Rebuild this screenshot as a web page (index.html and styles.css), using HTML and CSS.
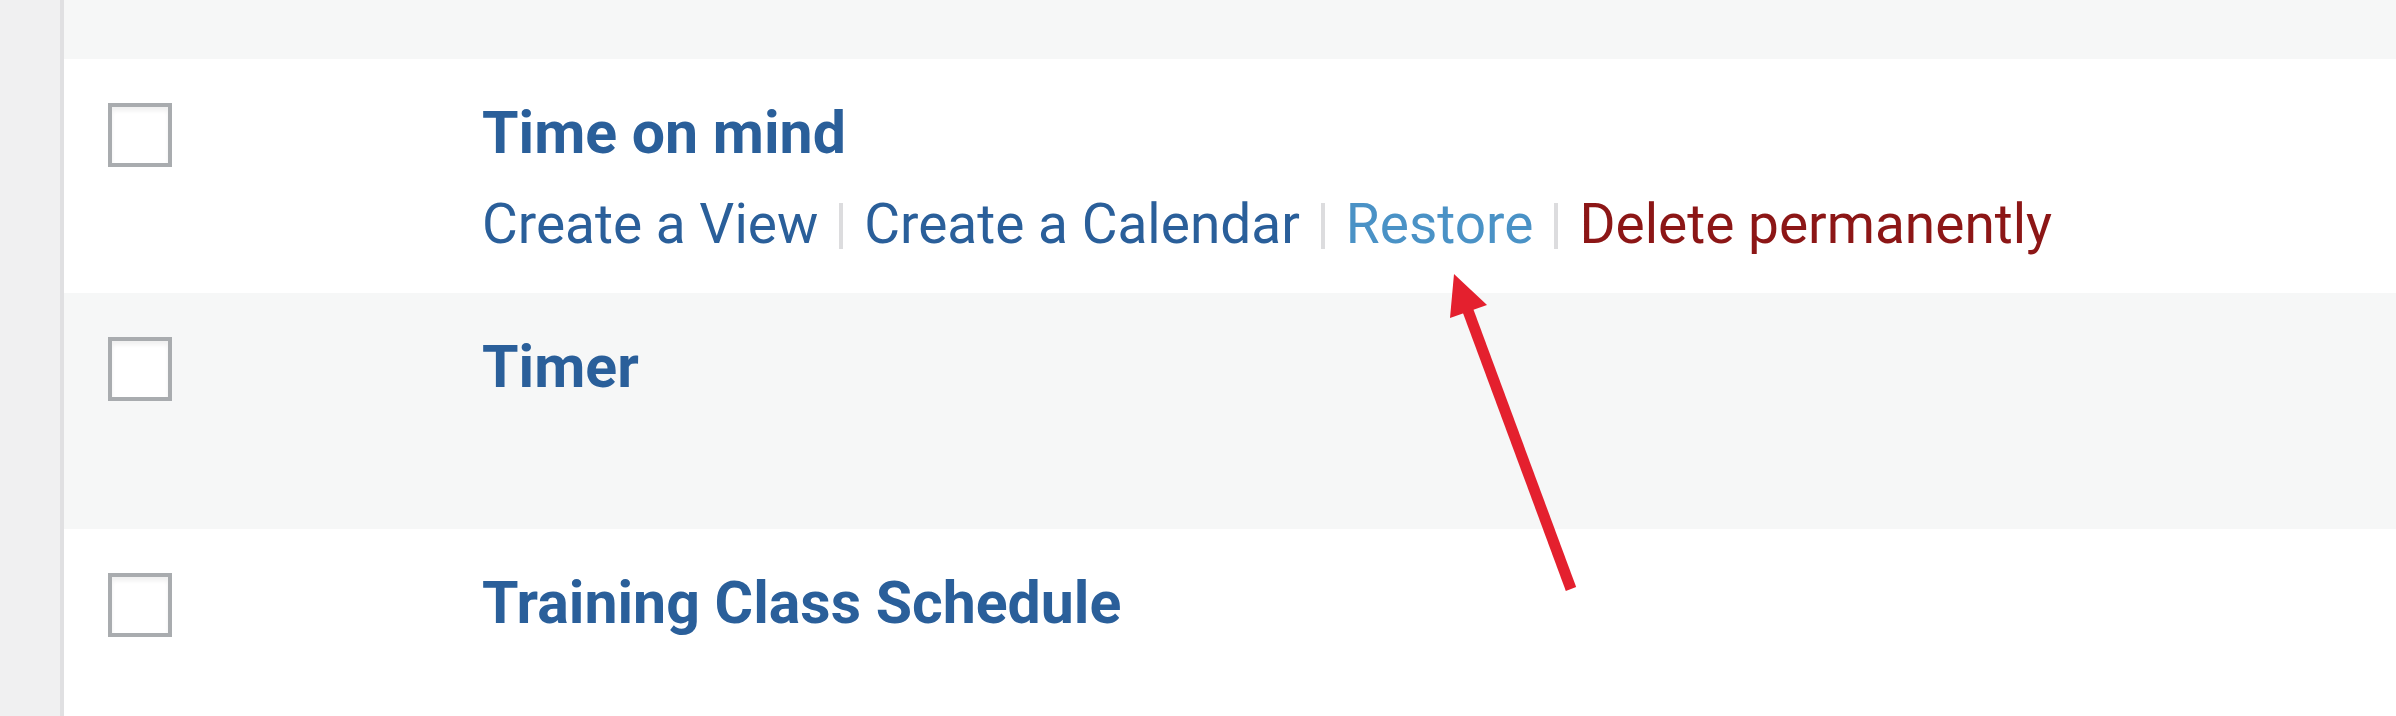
FILE: index.html
```html
<!DOCTYPE html>
<html lang="en">
<head>
<meta charset="utf-8">
<title>Trash list</title>
<link rel="stylesheet" href="styles.css">
</head>
<body>
<div class="screen">
  <aside class="sidebar"></aside>
  <main class="table">
    <div class="row row-alt row-top"></div>
    <div class="row">
      <div class="check-col"><span class="checkbox"></span></div>
      <div class="title-col">
        <a class="row-title">Time on mind</a>
        <div class="row-actions">
          <a class="act">Create a View</a><span class="sep"></span><a class="act">Create a Calendar</a><span class="sep"></span><a class="act act-restore">Restore</a><span class="sep"></span><a class="act act-delete">Delete permanently</a>
        </div>
      </div>
    </div>
    <div class="row row-alt row-mid">
      <div class="check-col"><span class="checkbox"></span></div>
      <div class="title-col">
        <a class="row-title">Timer</a>
      </div>
    </div>
    <div class="row row-last">
      <div class="check-col"><span class="checkbox"></span></div>
      <div class="title-col">
        <a class="row-title">Training Class Schedule</a>
      </div>
    </div>
  </main>
  <svg class="arrow" width="2396" height="716" viewBox="0 0 2396 716" xmlns="http://www.w3.org/2000/svg">
    <line x1="1571" y1="589" x2="1467" y2="308" stroke="#e4202e" stroke-width="11"/>
    <polygon points="1454,274 1450,318 1487,305" fill="#e4202e"/>
  </svg>
</div>
</body>
</html>
```

FILE: styles.css
```css
html, body {
  margin: 0;
  padding: 0;
  background: #ffffff;
}
body {
  width: 2396px;
  height: 716px;
  overflow: hidden;
  font-family: Roboto, "Liberation Sans", Arial, sans-serif;
}
.screen {
  position: relative;
  display: flex;
  width: 2396px;
  height: 716px;
}
.sidebar {
  width: 60px;
  flex: none;
  background: #f0f0f1;
}
.table {
  flex: 1;
  display: flex;
  flex-direction: column;
  border-left: 4px solid #e0e0e2;
  background: #ffffff;
}
.row {
  display: flex;
  align-items: flex-start;
  height: 234px;
  flex: none;
  background: #ffffff;
}
.row-alt {
  background: #f6f7f7;
}
.row-top {
  height: 59px;
}
.row-mid {
  height: 236px;
}
.row-last {
  flex: 1;
}
.check-col {
  width: 418px;
  flex: none;
  padding: 44px 0 0 44px;
  box-sizing: border-box;
}
.checkbox {
  display: block;
  width: 64px;
  height: 64px;
  box-sizing: border-box;
  border: 4px solid #a9acaf;
  background: #ffffff;
  box-shadow: inset 0 4px 4px rgba(0, 0, 0, 0.06);
}
.title-col {
  padding-top: 34px;
  display: flex;
  flex-direction: column;
}
.row-title {
  font-size: 59px;
  line-height: 80px;
  font-weight: 700;
  color: #2a5f9a;
}
.row-actions {
  margin-top: 11px;
  font-size: 55px;
  line-height: 80px;
  color: #2a5f9a;
  white-space: nowrap;
}
.act {
  color: #2a5f9a;
}
.act-restore {
  color: #4a92c6;
}
.act-delete {
  color: #8c1616;
}
.sep {
  display: inline-block;
  width: 4px;
  height: 46px;
  margin: 0 21px;
  background: #dcdcde;
  vertical-align: -6px;
}
.arrow {
  position: absolute;
  left: 0;
  top: 0;
  pointer-events: none;
}
```
